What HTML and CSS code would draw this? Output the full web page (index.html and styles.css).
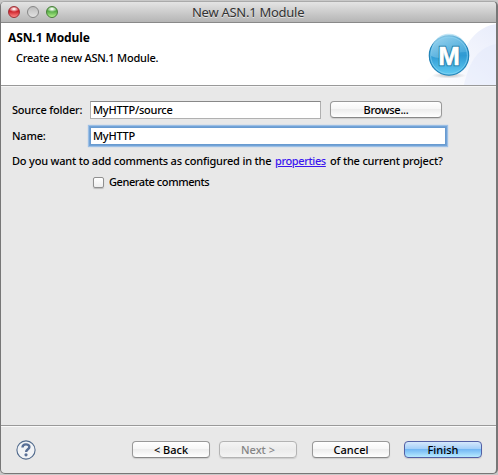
FILE: index.html
```html
<!DOCTYPE html>
<html lang="en">
<head>
<meta charset="utf-8">
<title>New ASN.1 Module</title>
<link rel="stylesheet" href="styles.css">
</head>
<body>
<main class="window">
  <header class="titlebar">
    <span class="light red"></span><span class="light gray"></span><span class="light green"></span>
    <h1 class="title">New ASN.1 Module</h1>
  </header>
  <section class="banner">
    <div class="banner-text">
      <h2 class="heading">ASN.1 Module</h2>
      <p class="description">Create a new ASN.1 Module.</p>
    </div>
    <svg class="art" width="75" height="62" viewBox="0 0 75 62">
      <defs>
        <linearGradient id="swoosh" x1="0" y1="1" x2="1" y2="0"><stop offset="0" stop-color="#fff"/><stop offset="1" stop-color="#e9edfb"/></linearGradient>
        <linearGradient id="ball" x1="0" y1="0" x2="0" y2="1"><stop offset="0" stop-color="#55aedb"/><stop offset=".5" stop-color="#2f9ad3"/><stop offset="1" stop-color="#62ccf3"/></linearGradient>
        <linearGradient id="shine" x1="0" y1="0" x2="1" y2="1"><stop offset="0" stop-color="#b8e2f5" stop-opacity=".85"/><stop offset="1" stop-color="#6fc2e8" stop-opacity=".2"/></linearGradient>
        <radialGradient id="shadow"><stop offset="0" stop-color="#999" stop-opacity=".6"/><stop offset="1" stop-color="#999" stop-opacity="0"/></radialGradient>
      </defs>
      <path d="M0 62C14 48 38 39 46 22C52 12 61 3 75 1V62Z" fill="url(#swoosh)"/>
      <path d="M43 62C47 44 54 25 75 21V62Z" fill="#dfe6fa" opacity=".45"/>
      <ellipse cx="28" cy="52.5" rx="17" ry="3" fill="url(#shadow)"/>
      <circle cx="28" cy="32.5" r="19.7" fill="url(#ball)" stroke="#2384b8" stroke-width="1.2"/>
      <path d="M10 33C9 3 46 5 46 29C31 28 24 39 10 33Z" fill="url(#shine)"/>
      <circle cx="28" cy="32.5" r="18.4" fill="none" stroke="#8dd4f2" stroke-width=".8" opacity=".8"/>
      <text class="emblem outline" x="28" y="42" text-anchor="middle">M</text>
      <text class="emblem" x="28" y="42" text-anchor="middle">M</text>
    </svg>
  </section>
  <section class="form">
    <div class="row source-row">
      <label class="label" for="source">Source folder:</label>
      <div class="field" id="source">MyHTTP/source</div>
      <button class="button browse">Browse...</button>
    </div>
    <div class="row name-row">
      <label class="label" for="name">Name:</label>
      <div class="field focused" id="name">MyHTTP</div>
    </div>
    <p class="question"><span>Do you want to add comments as configured in the</span><a class="link">properties</a><span>of the current project?</span></p>
    <div class="check-row"><span class="checkbox"></span><span class="check-text">Generate comments</span></div>
  </section>
  <footer class="footer">
    <svg class="help" width="20" height="20" viewBox="0 0 20 20"><circle cx="10" cy="10" r="9.1" fill="#f1f3f6" stroke="#526b8d" stroke-width="1.1"/><path d="M6.5 7.6C6.5 3.3 13.4 3.5 13.4 7.1C13.4 9.5 10.1 9.2 10.1 12.1" fill="none" stroke="#586f96" stroke-width="2.4"/><circle cx="10" cy="14.8" r="1.6" fill="#586f96"/></svg>
    <button class="button back">&lt; Back</button>
    <button class="button next" disabled>Next &gt;</button>
    <button class="button cancel">Cancel</button>
    <button class="button finish">Finish</button>
  </footer>
</main>
</body>
</html>
```
FILE: styles.css
```css
* { box-sizing: border-box; }
body { margin: 0; width: 498px; height: 475px; overflow: hidden; background: #c8c8c8; color: #000; font: 500 11px/16px "Noto Sans", "Open Sans", sans-serif; }
h1, h2, p { margin: 0; }
.window { width: 498px; height: 473px; margin-top: 1px; display: flex; flex-direction: column; border: 1px solid #777; border-top-color: #aaa; border-right-width: 2px; border-radius: 5px; background: #e8e8e8; overflow: hidden; }
.titlebar { height: 21px; flex: none; display: flex; align-items: center; padding-left: 7px; gap: 7px; background: linear-gradient(#e4e4e4, #b5b5b5); border-bottom: 1px solid #898989; }
.light { width: 12px; height: 12px; border-radius: 50%; border: 1px solid #777; }
.red { border-color: #9d3036; background: radial-gradient(ellipse 5px 3px at 50% 20%, #fff 10%, transparent), linear-gradient(#cf252d 45%, #ff8988); }
.gray { border-color: #868686; background: linear-gradient(#bdbdbd, #e2e2e2); }
.green { border-color: #477d38; background: radial-gradient(ellipse 5px 3px at 50% 20%, #fff 10%, transparent), linear-gradient(#5aae49 45%, #b2f18c); }
.title { margin-left: 127px; white-space: nowrap; font-size: 13px; line-height: 18px; font-weight: 400; letter-spacing: -.27px; color: #333; text-shadow: 0 1px #e5e5e5; }
.banner { height: 63px; flex: none; display: flex; justify-content: space-between; background: #fff; border-bottom: 1px solid #999; }
.banner-text { padding: 7px 0 0 7px; }
.heading { font-size: 12px; line-height: 16px; font-weight: 700; letter-spacing: -.1px; }
.description { margin: 4px 0 0 8px; white-space: nowrap; letter-spacing: -.22px; }
.art { display: block; }
.emblem { font: 700 26px "Liberation Sans", sans-serif; fill: #fff; stroke: #fff; stroke-width: .5px; }
.outline { stroke: #237fac; stroke-width: 2.4px; }
.form { flex: 1; padding: 13px 0 0 11px; border-top: 1px solid #f5f5f5; letter-spacing: -.2px; }
.row { display: flex; align-items: center; }
.source-row { height: 19px; }
.name-row { height: 21px; margin-top: 6px; }
.label { width: 78px; white-space: nowrap; }
.field { width: 231px; height: 18px; padding-left: 2px; background: #fff; border: 1px solid #b0b0b0; border-top-color: #888; line-height: 15px; letter-spacing: -.25px; }
.focused { width: 356px; height: 18px; border-color: #699bd0; box-shadow: 0 0 0 1px #72a3d7, 0 0 1px 2px #9cbfe5; }
.button { display: flex; align-items: center; justify-content: center; height: 17px; padding: 0; border: 1px solid #999; border-bottom-color: #888; border-radius: 4px; background: linear-gradient(#fff, #f6f6f6 45%, #ededed 50%, #fff); box-shadow: 0 1px 1px #ccc; color: #000; font: inherit; line-height: 15px; white-space: nowrap; }
.browse { width: 112px; margin: -1px 0 0 9px; letter-spacing: -.3px; }
.question { display: flex; height: 16px; margin-top: 7px; white-space: nowrap; }
.question > :first-child { width: 263px; }
.link { width: 55px; color: #3b16ef; text-decoration: underline; letter-spacing: -.38px; }
.check-row { height: 16px; margin-top: 5px; padding-left: 81px; display: flex; align-items: center; gap: 5px; }
.check-text { letter-spacing: -.42px; }
.checkbox { width: 11px; height: 11px; border: 1px solid #909090; border-radius: 2px; background: linear-gradient(#fff, #eee); box-shadow: 0 1px 1px #bbb; }
.footer { height: 48px; flex: none; display: flex; align-items: center; padding-left: 15px; border-top: 1px solid #999; box-shadow: inset 0 1px #fafafa; }
.help { flex: none; }
.footer .button { width: 78px; }
.back { margin-left: 96px; }
.next { margin-left: 9px; color: #858585; border-color: #b3b3b3; background: linear-gradient(#f4f4f4, #ebebeb 50%, #f4f4f4); }
.cancel { margin-left: 15px; }
.finish { margin-left: 14px; border-color: #5360a5; background: linear-gradient(#d5e8fc, #a2cef8 47%, #73b8f4 50%, #b7eaff); }
```
